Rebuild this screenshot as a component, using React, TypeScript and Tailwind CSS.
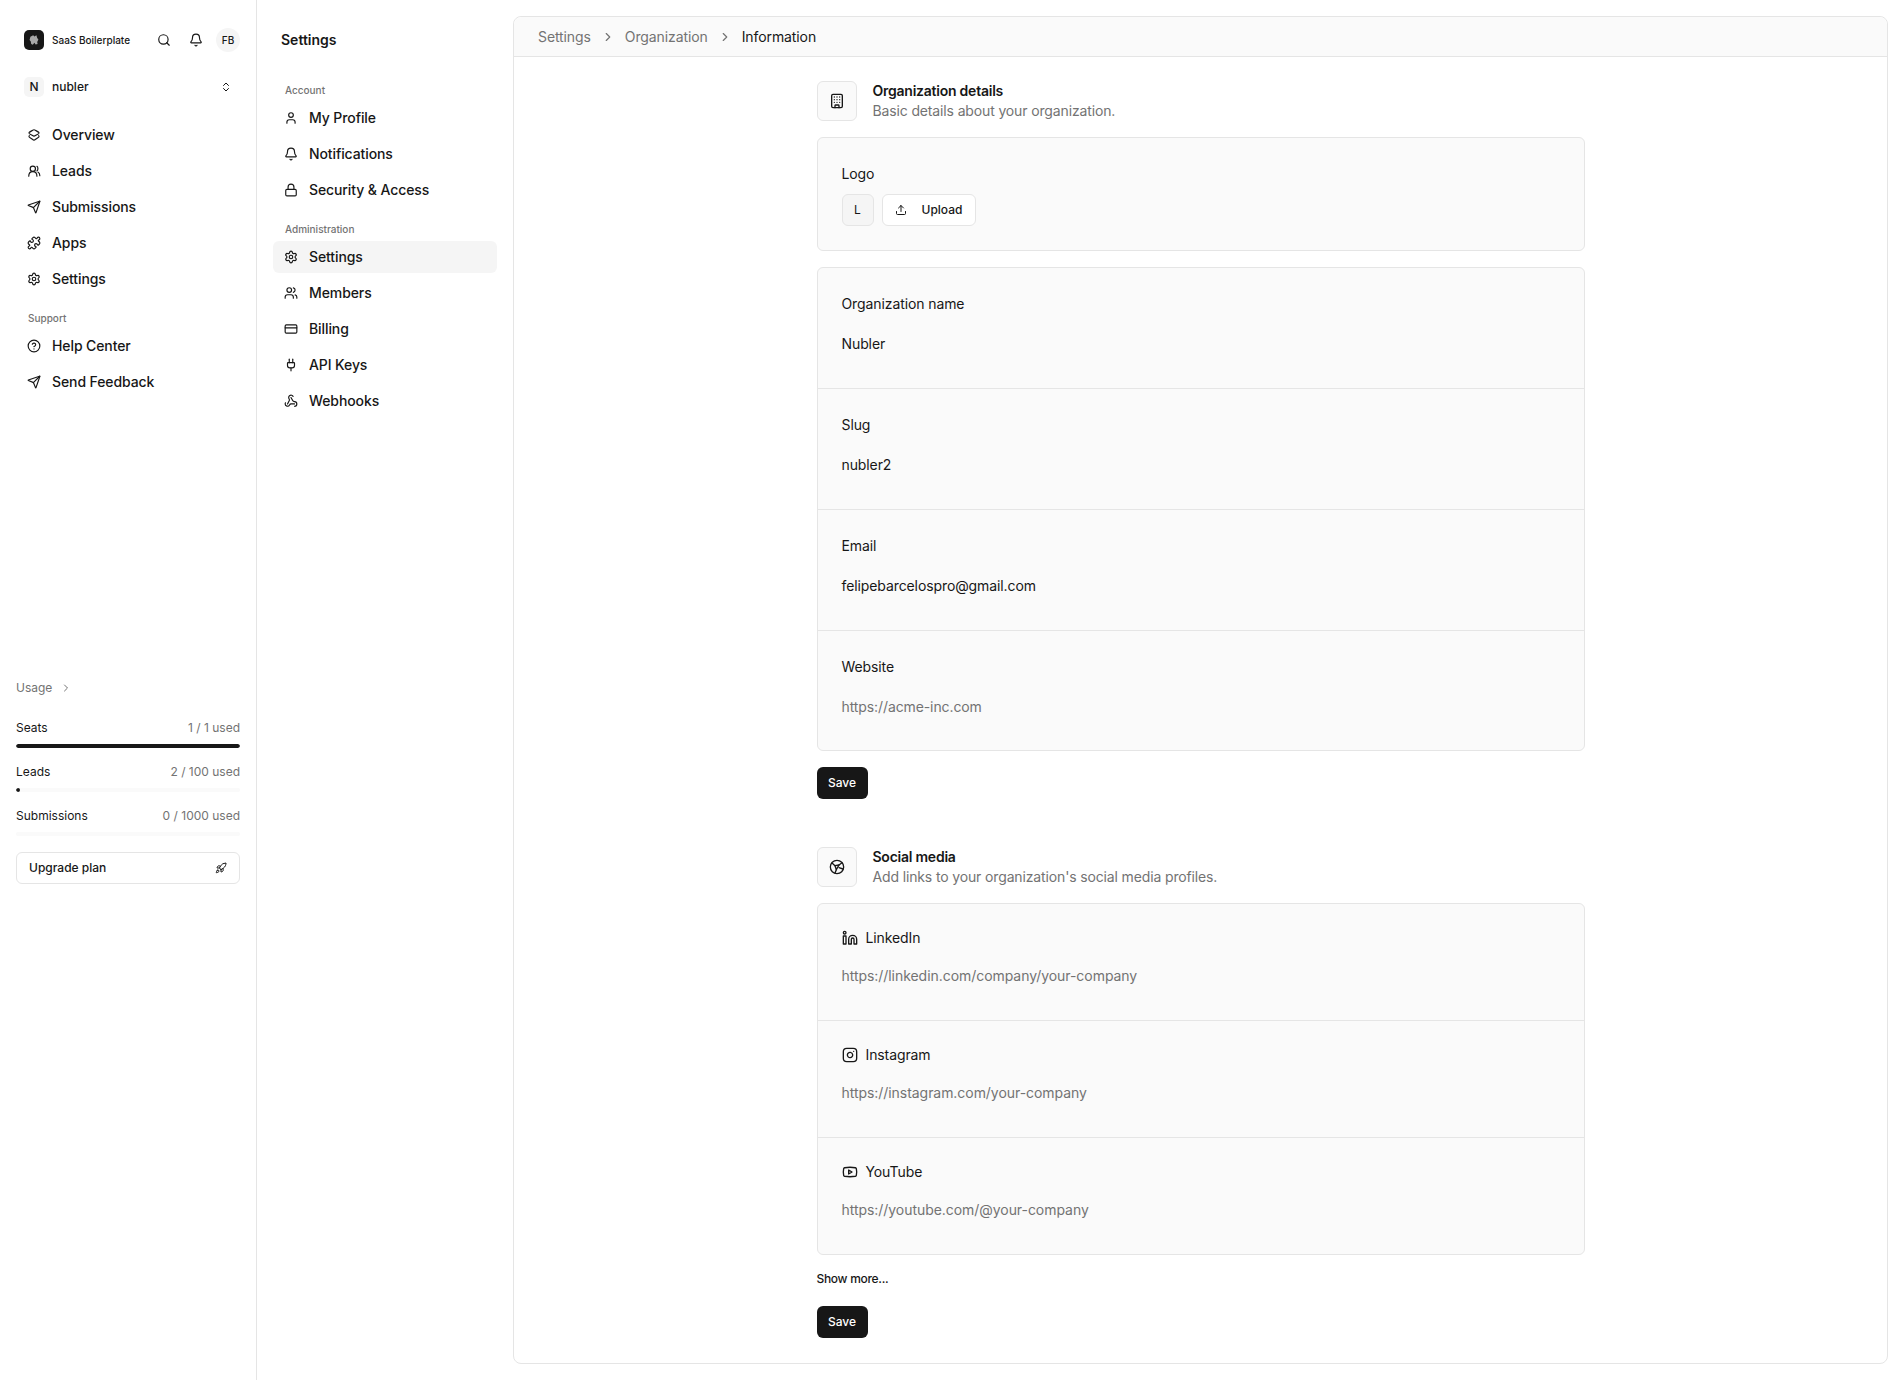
import type { ElementType } from "react";
import {
  Bell,
  Building,
  ChevronRight,
  ChevronsUpDown,
  CircleHelp,
  CreditCard,
  Instagram,
  Linkedin,
  Lock,
  Plug,
  Puzzle,
  Rocket,
  Search,
  Send,
  Settings,
  Upload,
  User,
  Users,
  Webhook,
  Youtube,
} from "lucide-react";

type IconProps = { className?: string; strokeWidth?: number };

function OverviewIcon({ className, strokeWidth }: IconProps) {
  return (
    <svg viewBox="0 0 24 24" className={className} fill="none" stroke="currentColor" strokeWidth={strokeWidth} strokeLinecap="round" strokeLinejoin="round">
      <path d="M12 3c.6 0 7.500 3.600 8.200 4.600.4.6.4 1.200 0 1.800C19.500 10.400 12.600 14 12 14S4.500 10.400 3.800 9.400c-.4-.6-.4-1.200 0-1.800C4.500 6.600 11.400 3 12 3z" />
      <path d="M4 13c-.6.6-.8 1.400-.3 2.200C4.500 16.300 11.400 21 12 21s7.500-4.700 8.300-5.800c.5-.8.3-1.600-.3-2.200" />
    </svg>
  );
}

function LeadsIcon({ className, strokeWidth }: IconProps) {
  return (
    <svg viewBox="0 0 24 24" className={className} fill="none" stroke="currentColor" strokeWidth={strokeWidth} strokeLinecap="round" strokeLinejoin="round">
      <circle cx="10" cy="8" r="4.5" />
      <path d="M3 21c0-5 3-8 7-8s7 3 7 8" />
      <path d="M17 4c2 1 2.500 6 0 8" />
      <path d="M22 20c0-3-1-5-3-6" />
    </svg>
  );
}

function SocialIcon({ className, strokeWidth }: IconProps) {
  return (
    <svg viewBox="0 0 24 24" className={className} fill="none" stroke="currentColor" strokeWidth={strokeWidth} strokeLinecap="round" strokeLinejoin="round">
      <circle cx="12" cy="12" r="10" />
      <path d="M4.500 6 9 10l6-1 4.500-3.500" />
      <path d="M9 10l2 6 4-7" />
      <path d="M11 16l-2 5M15 13l6 2" />
    </svg>
  );
}

function NavItem({ icon: Icon, label, active }: { icon: ElementType; label: string; active?: boolean }) {
  return (
    <div className={`flex h-8 items-center gap-[11px] rounded-md px-[11px] ${active ? "bg-[#f5f5f5]" : ""}`}>
      <Icon className="h-3.5 w-3.5 shrink-0 text-[#171717]" strokeWidth={2} />
      <span className="text-sm font-medium tracking-[-0.1px] text-[#171717]">{label}</span>
    </div>
  );
}

function GroupLabel({ children }: { children: string }) {
  return <p className="flex h-6 items-center px-3 text-[10px] font-medium text-[#737373]">{children}</p>;
}

function Usage({ label, value, pct }: { label: string; value: string; pct: number }) {
  return (
    <div className="flex flex-col gap-2">
      <div className="flex h-4 items-center justify-between text-xs">
        <span className="text-[#171717]">{label}</span>
        <span className="text-[#737373]">{value}</span>
      </div>
      <div className="h-1 overflow-hidden rounded-full bg-[#fafafa]">
        <div className="h-full rounded-full bg-[#171717]" style={{ width: `${pct}%` }} />
      </div>
    </div>
  );
}

function Sidebar() {
  return (
    <aside className="w-[257px] shrink-0 border-r border-[#e5e5e5]">
      <div className="flex h-[900px] flex-col px-4 pb-4">
        <div className="h-[77px] pt-7">
          <div className="flex items-center pl-2">
            <div className="flex h-5 w-5 items-center justify-center rounded-[5px] bg-[#171717]">
              <svg viewBox="0 0 20 20" className="h-4 w-4" fill="#a8a8a8">
                <path d="M5.500 6 9 4l1.500 1.500L13 4l1 3.500 1.500 2-1.500 3 .5 2.500-2.500.5-1.500-2-2 2.500-2-1-.5-3L4.500 10z" />
              </svg>
            </div>
            <span className="ml-2 text-[10px] font-medium text-[#171717]">SaaS Boilerplate</span>
            <Search className="ml-auto h-3.5 w-3.5 text-[#171717]" strokeWidth={2} />
            <Bell className="ml-[18px] h-3.5 w-3.5 text-[#171717]" strokeWidth={2} />
            <div className="ml-[13px] flex h-6 w-6 items-center justify-center rounded-full bg-[#f5f5f5] text-[10px] font-medium text-[#171717]">
              FB
            </div>
          </div>
        </div>
        <div className="flex items-center pl-2">
          <div className="flex h-5 w-5 items-center justify-center rounded-[5px] bg-[#f5f5f5] text-xs font-medium text-[#171717]">N</div>
          <span className="ml-2 text-xs font-medium text-[#171717]">nubler</span>
          <ChevronsUpDown className="ml-auto mr-2 h-3 w-3 text-[#171717]" strokeWidth={2} />
        </div>
        <nav className="mt-[22px] flex flex-col gap-1">
          <NavItem icon={OverviewIcon} label="Overview" />
          <NavItem icon={LeadsIcon} label="Leads" />
          <NavItem icon={Send} label="Submissions" />
          <NavItem icon={Puzzle} label="Apps" />
          <NavItem icon={Settings} label="Settings" />
        </nav>
        <div className="mt-[11px] flex flex-col">
          <GroupLabel>Support</GroupLabel>
          <div className="flex flex-col gap-1">
            <NavItem icon={CircleHelp} label="Help Center" />
            <NavItem icon={Send} label="Send Feedback" />
          </div>
        </div>
        <div className="mt-auto flex flex-col">
          <div className="flex items-center gap-2 text-xs text-[#737373]">
            Usage <ChevronRight className="h-3 w-3" strokeWidth={2} />
          </div>
          <div className="mt-6 flex flex-col gap-4">
            <Usage label="Seats" value="1 / 1 used" pct={100} />
            <Usage label="Leads" value="2 / 100 used" pct={2} />
            <Usage label="Submissions" value="0 / 1000 used" pct={0} />
          </div>
          <button className="mt-4 flex h-8 items-center justify-between rounded-md border border-[#e5e5e5] bg-white px-3 text-xs font-medium text-[#171717]">
            Upgrade plan
            <Rocket className="h-3 w-3" strokeWidth={2} />
          </button>
        </div>
      </div>
    </aside>
  );
}

function SettingsNav() {
  return (
    <aside className="w-[256px] shrink-0 px-4">
      <h2 className="mt-[30px] px-2 text-sm font-semibold text-[#171717]">Settings</h2>
      <div className="mt-[28px]">
        <GroupLabel>Account</GroupLabel>
        <div className="flex flex-col gap-1">
          <NavItem icon={User} label="My Profile" />
          <NavItem icon={Bell} label="Notifications" />
          <NavItem icon={Lock} label="Security & Access" />
        </div>
      </div>
      <div className="mt-[11px]">
        <GroupLabel>Administration</GroupLabel>
        <div className="flex flex-col gap-1">
          <NavItem icon={Settings} label="Settings" active />
          <NavItem icon={Users} label="Members" />
          <NavItem icon={CreditCard} label="Billing" />
          <NavItem icon={Plug} label="API Keys" />
          <NavItem icon={Webhook} label="Webhooks" />
        </div>
      </div>
    </aside>
  );
}

function SectionHead({ icon: Icon, title, desc }: { icon: ElementType; title: string; desc: string }) {
  return (
    <div className="flex items-center gap-4">
      <div className="flex h-10 w-10 items-center justify-center rounded-md border border-[#e5e5e5] bg-[#fafafa]">
        <Icon className="h-4 w-4 text-[#171717]" strokeWidth={2} />
      </div>
      <div>
        <h3 className="text-sm font-semibold leading-5 tracking-[-0.24px] text-[#171717]">{title}</h3>
        <p className="text-sm leading-5 tracking-[-0.14px] text-[#737373]">{desc}</p>
      </div>
    </div>
  );
}

function Field({ label, value, placeholder }: { label: string; value: string; placeholder?: boolean }) {
  return (
    <div className="h-[121px] border-b border-[#e5e5e5] px-6 pt-[26px] last:h-[119px] last:border-b-0">
      <p className="text-sm leading-5 tracking-[-0.1px] text-[#171717]">{label}</p>
      <p className={`mt-5 text-sm leading-5 tracking-[-0.1px] ${placeholder ? "text-[#737373]" : "text-[#171717]"}`}>{value}</p>
    </div>
  );
}

function SocialField({ icon: Icon, label, value }: { icon: ElementType; label: string; value: string }) {
  return (
    <div className="h-[117px] border-b border-[#e5e5e5] px-6 pt-[24px] last:h-[116px] last:border-b-0">
      <p className="flex items-center gap-2 text-sm leading-5 tracking-[-0.1px] text-[#171717]">
        <Icon className="h-4 w-4" strokeWidth={2} />
        {label}
      </p>
      <p className="mt-[18px] text-sm leading-5 tracking-[-0.05px] text-[#737373]">{value}</p>
    </div>
  );
}

function SaveButton() {
  return (
    <button className="flex h-8 w-[51px] items-center justify-center rounded-md bg-[#171717] text-xs font-medium text-white">Save</button>
  );
}

function Main() {
  return (
    <main className="my-4 mr-2 flex min-w-0 flex-1 flex-col rounded-lg border border-[#e5e5e5] bg-white">
      <div className="flex h-10 items-center gap-2.5 rounded-t-lg border-b border-[#e5e5e5] bg-[#fafafa] px-6 text-sm tracking-[-0.1px] text-[#737373]">
        <span>Settings</span>
        <ChevronRight className="h-3.5 w-3.5" strokeWidth={2} />
        <span>Organization</span>
        <ChevronRight className="h-3.5 w-3.5" strokeWidth={2} />
        <span className="text-[#171717]">Information</span>
      </div>
      <div className="mx-auto w-[768px] pt-6">
        <SectionHead icon={Building} title="Organization details" desc="Basic details about your organization." />
        <div className="mt-4 h-[114px] rounded-md border border-[#e5e5e5] bg-[#fafafa] px-6 pt-[26px]">
          <p className="text-sm leading-5 tracking-[-0.1px] text-[#171717]">Logo</p>
          <div className="mt-2.5 flex items-center gap-2">
            <div className="flex h-8 w-8 items-center justify-center rounded-md border border-[#e5e5e5] bg-[#f5f5f5] text-xs text-[#171717]">L</div>
            <button className="flex h-8 items-center gap-[15px] rounded-md border border-[#e5e5e5] bg-white pl-3 pr-[13px] text-xs font-medium text-[#171717]">
              <Upload className="h-3 w-3" strokeWidth={2} />
              Upload
            </button>
          </div>
        </div>
        <div className="mt-4 rounded-md border border-[#e5e5e5] bg-[#fafafa]">
          <Field label="Organization name" value="Nubler" />
          <Field label="Slug" value="nubler2" />
          <Field label="Email" value="felipebarcelospro@gmail.com" />
          <Field label="Website" value="https://acme-inc.com" placeholder />
        </div>
        <div className="mt-4">
          <SaveButton />
        </div>
        <div className="mt-12">
          <SectionHead icon={SocialIcon} title="Social media" desc="Add links to your organization's social media profiles." />
        </div>
        <div className="mt-4 rounded-md border border-[#e5e5e5] bg-[#fafafa]">
          <SocialField icon={Linkedin} label="LinkedIn" value="https://linkedin.com/company/your-company" />
          <SocialField icon={Instagram} label="Instagram" value="https://instagram.com/your-company" />
          <SocialField icon={Youtube} label="YouTube" value="https://youtube.com/@your-company" />
        </div>
        <p className="mt-4 text-xs font-medium leading-4 tracking-[-0.3px] text-[#171717]">Show more...</p>
        <div className="mt-[19px]">
          <SaveButton />
        </div>
      </div>
    </main>
  );
}

export default function App() {
  return (
    <div className="flex min-h-screen bg-white font-['Inter',sans-serif] text-[#171717]">
      <Sidebar />
      <SettingsNav />
      <Main />
    </div>
  );
}
